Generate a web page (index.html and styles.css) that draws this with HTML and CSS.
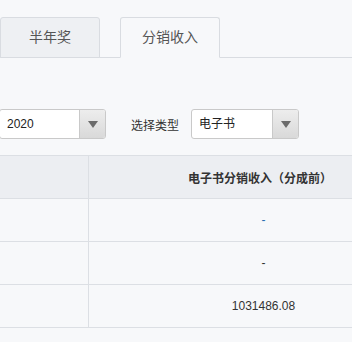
FILE: index.html
```html
<!DOCTYPE html>
<html lang="zh-CN">
<head>
    <meta charset="UTF-8">
    <meta name="viewport" content="width=device-width, initial-scale=1.0">
    <title>分销收入</title>
    <link rel="stylesheet" href="styles.css">
</head>
<body>
    <div class="tabs">
        <a class="tab">半年奖</a>
        <a class="tab active">分销收入</a>
    </div>

    <div class="filters">
        <div class="select first">
            <span class="select-value">2020</span>
            <span class="select-btn"><i class="arrow"></i></span>
        </div>
        <span class="filter-label">选择类型</span>
        <div class="select">
            <span class="select-value">电子书</span>
            <span class="select-btn"><i class="arrow"></i></span>
        </div>
    </div>

    <div class="table-wrap">
        <div class="table">
            <div class="row head">
                <div class="cell col-a"></div>
                <div class="cell col-b">电子书分销收入（分成前）</div>
            </div>
            <div class="row">
                <div class="cell col-a"></div>
                <div class="cell col-b"><a class="link">-</a></div>
            </div>
            <div class="row">
                <div class="cell col-a"></div>
                <div class="cell col-b">-</div>
            </div>
            <div class="row">
                <div class="cell col-a"></div>
                <div class="cell col-b">1031486.08</div>
            </div>
        </div>
    </div>
</body>
</html>
```

FILE: styles.css
```css
* {
    margin: 0;
    padding: 0;
    box-sizing: border-box;
}

body {
    font-family: "Liberation Sans", "Noto Sans CJK SC", sans-serif;
    font-size: 12px;
    color: #333;
    background: #f7f8fa;
    overflow: hidden;
}

.tabs {
    display: flex;
    gap: 20px;
    padding-top: 17px;
    border-bottom: 1px solid #d9dce1;
}

.tab {
    width: 100px;
    height: 41px;
    margin-bottom: -1px;
    line-height: 39px;
    text-align: center;
    font-size: 14px;
    color: #555;
    background: #eef0f3;
    border: 1px solid #d9dce1;
    border-radius: 3px 3px 0 0;
}

.tab.active {
    background: #f7f8fa;
    border-bottom-color: #f7f8fa;
}

.filters {
    display: flex;
    align-items: center;
    margin-top: 51px;
}

.select {
    display: flex;
    width: 108px;
    height: 30px;
    background: #fff;
    border: 1px solid #c9c9c9;
    border-radius: 3px;
}

.select.first {
    width: 107px;
    margin-left: -1px;
}

.select-value {
    flex: 1;
    line-height: 28px;
    padding-left: 7px;
    color: #222;
}

.select-btn {
    width: 26px;
    display: flex;
    align-items: center;
    justify-content: center;
    background: linear-gradient(to bottom, #ededed, #d9d9d9);
    border-left: 1px solid #c9c9c9;
    border-radius: 0 2px 2px 0;
}

.arrow {
    width: 0;
    height: 0;
    border-left: 5px solid transparent;
    border-right: 5px solid transparent;
    border-top: 7px solid #6b6b6b;
}

.filter-label {
    margin: 0 12px 0 25px;
    color: #333;
}

.table-wrap {
    margin-top: 16px;
    width: 100%;
    overflow: hidden;
}

.table {
    width: 440px;
    border-top: 1px solid #dcdfe4;
}

.row {
    display: flex;
    height: 43px;
    border-bottom: 1px solid #dcdfe4;
}

.row.head {
    background: #eceef2;
    font-weight: bold;
}

.cell {
    display: flex;
    align-items: center;
    justify-content: center;
}

.col-a {
    width: 89px;
    border-right: 1px solid #dcdfe4;
}

.col-b {
    width: 345px;
    padding-left: 4px;
}

.head .col-b {
    padding-left: 0;
    padding-right: 3px;
}

.link {
    color: #2a6db0;
}
```
